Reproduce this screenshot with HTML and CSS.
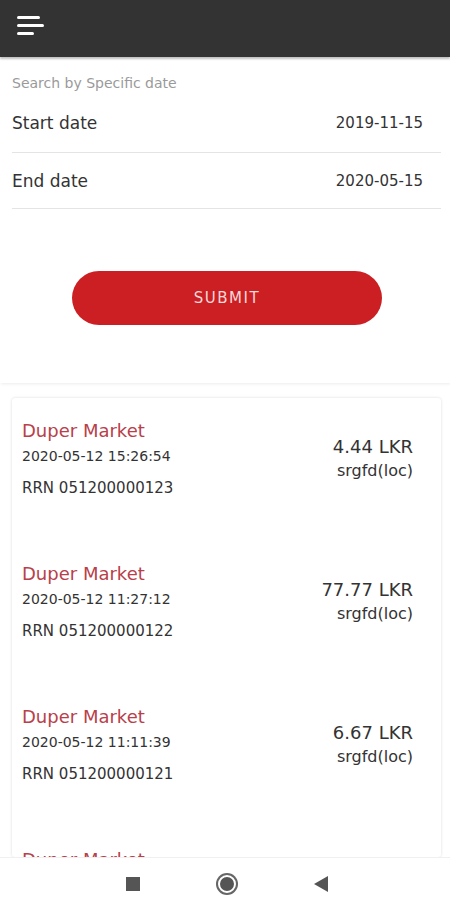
FILE: index.html
```html
<!DOCTYPE html>
<html lang="en">
<head>
    <meta charset="UTF-8">
    <meta name="viewport" content="width=device-width, initial-scale=1.0">
    <title>Transactions</title>
    <link rel="stylesheet" href="styles.css">
</head>
<body>

<div class="topbar">
    <svg class="menu" width="28" height="24" viewBox="0 0 28 24">
        <rect x="0" y="2" width="23" height="3" rx="1.5" fill="#fff"/>
        <rect x="0" y="10" width="27" height="3" rx="1.5" fill="#fff"/>
        <rect x="0" y="18" width="17" height="3" rx="1.5" fill="#fff"/>
    </svg>
</div>

<div class="search">
    <p class="hint">Search by Specific date</p>
    <div class="row first">
        <span class="label">Start date</span>
        <span class="value">2019-11-15</span>
    </div>
    <div class="row">
        <span class="label">End date</span>
        <span class="value">2020-05-15</span>
    </div>
    <div class="actions">
        <button type="button">SUBMIT</button>
    </div>
</div>

<div class="list">
    <div class="item">
        <div class="left">
            <div class="merchant">Duper Market</div>
            <div class="date">2020-05-12 15:26:54</div>
            <div class="rrn">RRN 051200000123</div>
        </div>
        <div class="right">
            <div class="amount">4.44 LKR</div>
            <div class="loc">srgfd(loc)</div>
        </div>
    </div>
    <div class="item">
        <div class="left">
            <div class="merchant">Duper Market</div>
            <div class="date">2020-05-12 11:27:12</div>
            <div class="rrn">RRN 051200000122</div>
        </div>
        <div class="right">
            <div class="amount">77.77 LKR</div>
            <div class="loc">srgfd(loc)</div>
        </div>
    </div>
    <div class="item">
        <div class="left">
            <div class="merchant">Duper Market</div>
            <div class="date">2020-05-12 11:11:39</div>
            <div class="rrn">RRN 051200000121</div>
        </div>
        <div class="right">
            <div class="amount">6.67 LKR</div>
            <div class="loc">srgfd(loc)</div>
        </div>
    </div>
    <div class="item">
        <div class="left">
            <div class="merchant">Duper Market</div>
        </div>
    </div>
</div>

<div class="navbar">
    <span class="square"></span>
    <span class="home"></span>
    <svg width="14" height="16" viewBox="0 0 14 16">
        <polygon points="14,0 14,16 0,8" fill="#555"/>
    </svg>
</div>

</body>
</html>
```

FILE: styles.css
```css
body {
    font-family: "DejaVu Sans", sans-serif;
    margin: 0;
    padding: 0;
    background-color: #fff;
    color: #333;
    height: 900px;
    overflow: hidden;
    display: flex;
    flex-direction: column;
}

.topbar {
    flex: none;
    height: 57px;
    background-color: #333;
    box-shadow: 0 2px 2px rgba(0, 0, 0, 0.25);
    display: flex;
    align-items: center;
    padding-left: 17px;
    position: relative;
    z-index: 1;
}

.menu {
    margin-top: -6px;
}

.search {
    flex: none;
    padding: 0 9px 0 12px;
    box-shadow: 1px 1px 3px rgba(0, 0, 0, 0.08);
    height: 326px;
}

.hint {
    margin: 0;
    padding-top: 16px;
    font-size: 14px;
    color: #9a9a9a;
    line-height: 20px;
}

.row {
    display: flex;
    justify-content: space-between;
    align-items: center;
    height: 55px;
    border-bottom: 1px solid #e4e4e4;
    padding-right: 18px;
}

.row.first {
    height: 58px;
    padding-top: 1px;
}

.label {
    font-size: 17px;
}

.value {
    font-size: 15px;
}

.actions {
    display: flex;
    padding-top: 62px;
    padding-left: 60px;
}

button {
    width: 310px;
    height: 54px;
    border: none;
    border-radius: 27px;
    background-color: #cb1f24;
    color: #f6d8d8;
    font-family: inherit;
    font-size: 15px;
    letter-spacing: 1.5px;
    cursor: pointer;
}

.list {
    flex: 1;
    min-height: 0;
    overflow: hidden;
    margin: 15px 9px 0 12px;
    box-shadow: 0 0 3px rgba(0, 0, 0, 0.15);
    border-radius: 3px;
    padding-top: 22px;
}

.item {
    display: flex;
    justify-content: space-between;
    height: 143px;
    padding: 0 28px 0 10px;
}

.merchant {
    color: #b8404a;
    font-size: 18px;
    line-height: 22px;
}

.date {
    font-size: 14px;
    line-height: 28px;
}

.rrn {
    font-size: 15px;
    line-height: 36px;
}

.right {
    text-align: right;
    padding-top: 15px;
}

.amount {
    font-size: 18px;
    line-height: 24px;
}

.loc {
    font-size: 16px;
    line-height: 24px;
}

.navbar {
    flex: none;
    height: 32px;
    background-color: #fff;
    border-top: 1px solid #f0f0f0;
    display: flex;
    align-items: center;
    justify-content: center;
    gap: 78px;
    padding: 10px 0 0 4px;
}

.square {
    width: 14px;
    height: 14px;
    background-color: #555;
}

.home {
    width: 14px;
    height: 14px;
    border-radius: 50%;
    background-color: #555;
    border: 2px solid #fff;
    box-shadow: 0 0 0 2px #666;
}
```
